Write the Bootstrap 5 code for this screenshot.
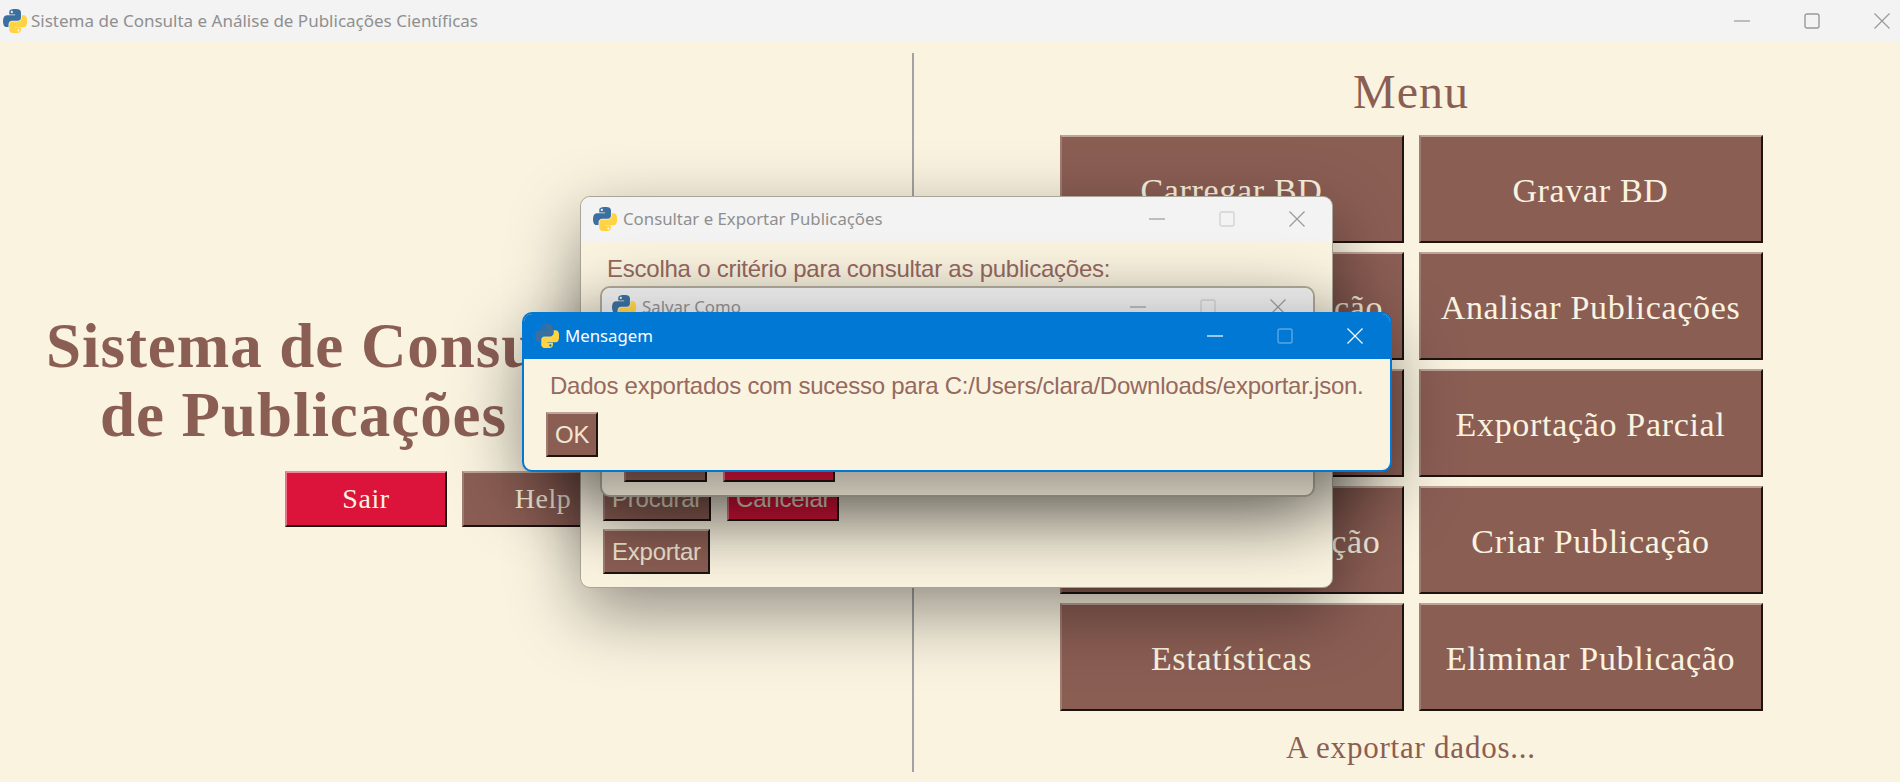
<!DOCTYPE html>
<html lang="pt">

<head>
    <meta charset="UTF-8">
    <meta name="viewport" content="width=device-width, initial-scale=1.0">
    <title>Sistema de Consulta e Análise de Publicações Científicas</title>
    <link href="https://cdn.jsdelivr.net/npm/bootstrap@5.3.0/dist/css/bootstrap.min.css" rel="stylesheet">
    <style>
        html, body { height: 100%; }
        body { background: #faf3e0; overflow: hidden; color: #8b5e54; }

        .title-bar { height: 42px; background: #f3f3f3; flex: none; padding-left: 3px; }
        .title-text { font-family: "Noto Sans", sans-serif; font-size: 17px; color: #8f8f8f; white-space: nowrap; }
        .py-icon { width: 24px; height: 24px; flex: none; }
        .ctl-group { color: #999; margin-left: auto; }
        .ctl-btn { width: 70px; height: 24px; display: flex; align-items: center; justify-content: center; }
        .ctl-btn svg { width: 16px; height: 16px; display: block; }
        .main-ctl { margin-right: -17px; }
        .ctl-faint { opacity: .35; }

        .left-pane { width: 912px; padding: 270px 3px 0 0; }
        .app-title { font-family: "Liberation Serif", serif; font-weight: 700; font-size: 63px; line-height: 69px; letter-spacing: .015em; margin-bottom: 21px; padding-left: 12px; color: #8b5e54; white-space: nowrap; }
        .side-row { gap: 15px; }
        .divider-line { width: 2px; background: #a2a2a2; margin: 11px 0 10px; flex: none; }
        .right-pane { padding-left: 8px; padding-top: 18px; }
        .menu-title { font-family: "Liberation Serif", serif; font-size: 48px; line-height: 64px; letter-spacing: .02em; margin: 0 0 11px; font-weight: 400; color: #8b5e54; }
        .menu-grid { grid-template-columns: 344px 344px; gap: 9px 15px; }
        .status-text { font-family: "Liberation Serif", serif; font-size: 31px; line-height: 40px; letter-spacing: .025em; margin-top: 17px; }

        .relief-btn { background: #8b5e54; color: #faf3e0; border-radius: 0; padding: 0; border-style: solid; border-width: 2px; border-color: #bda498 #1d1412 #1d1412 #a07c70; }
        .relief-btn:hover { background: #8b5e54; color: #faf3e0; border-color: #bda498 #1d1412 #1d1412 #a07c70; }
        .menu-btn { height: 108px; padding-top: 2px; font-family: "Liberation Serif", serif; font-size: 34px; letter-spacing: .02em; }
        .side-btn { width: 162px; height: 56px; font-family: "Liberation Serif", serif; font-size: 28px; letter-spacing: .02em; }
        .danger-btn, .danger-btn:hover { background: #dc143c; border-color: #f0879c #1d1412 #1d1412 #ee6f88; }

        .desk-win { position: absolute; background: #faf3e0; border-radius: 10px; box-shadow: 0 24px 70px rgba(0, 0, 0, .42); }
        .win-bar { height: 45px; padding: 0 0 2px 12px; background: #f3f3f3; border-radius: 10px 10px 0 0; flex: none; }
        .win-name { font-family: "Noto Sans", sans-serif; font-size: 16.8px; margin-left: 2px; color: #8f8f8f; white-space: nowrap; }
        .win-text { font-family: "Liberation Sans", sans-serif; font-size: 24px; line-height: 30px; color: #96695f; white-space: nowrap; letter-spacing: -.01em; }
        .sm-btn, .sm-btn:hover { height: 45px; padding: 0 7px; font-family: "Liberation Sans", sans-serif; font-size: 24px; color: #f0e6d2; letter-spacing: -.01em; }
        .win-body { padding: 8px 22px 13px; }

        .win-consult { left: 580px; top: 196px; width: 753px; height: 392px; border: 1px solid #aaa598; }
        .win-save { left: 600px; top: 286px; width: 715px; height: 211px; border: 2px solid #a8a394; }
        .win-save .win-bar { background: #e9e9e9; height: 40px; padding-left: 10px; }
        .save-first, .save-first:hover { padding: 0 6px; }
        .win-msg { left: 522px; top: 312px; width: 870px; height: 160px; border: 2px solid #0078d4; }
        .win-msg .win-bar { background: #0078d4; padding-left: 11px; border-radius: 8px 8px 0 0; }
        .win-msg .win-name { color: #fff; }
        .win-msg .ctl-group { color: #fff; }
        .msg-body { padding: 8px 0 0 26px; }
        .ok-btn { margin: 11px 0 0 -4px; }
    </style>
</head>

<body>
    <svg width="0" height="0" class="position-absolute">
        <symbol id="pyLogo" viewBox="0 0 110 110">
            <path fill="#3a6f9f" d="M54.9 0c-4.6 0-9 .4-12.8 1.100C30.800 3.100 28.700 7.300 28.700 15v10.200h26.800v3.400H18.600C10.800 28.700 4 33.300 1.900 42.200c-2.500 10.200-2.600 16.600 0 27.300C3.800 77.400 8.300 83 16.100 83h9.200V70.800c0-8.900 7.700-16.700 16.800-16.700h26.800c7.500 0 13.400-6.100 13.400-13.600V15c0-7.300-6.100-12.700-13.400-13.900C64.300.3 59.500 0 54.900 0zM40.400 8.200c2.800 0 5 2.300 5 5.100s-2.300 5.100-5 5.100-5-2.300-5-5.100 2.300-5.100 5-5.100z"/>
            <path fill="#ffd343" d="M85.600 28.700v11.900c0 9.200-7.800 17-16.700 17H42.100c-7.300 0-13.400 6.300-13.400 13.600v25.500c0 7.300 6.300 11.500 13.400 13.600 8.500 2.500 16.600 2.900 26.800 0 6.800-2 13.400-5.900 13.400-13.600V86.500H55.500v-3.400h40.200c7.800 0 10.700-5.400 13.400-13.600 2.800-8.400 2.700-16.500 0-27.300-1.900-7.800-5.600-13.600-13.400-13.600zM70.600 93.300c2.800 0 5 2.300 5 5.100s-2.300 5.100-5 5.100-5-2.300-5-5.100 2.300-5.100 5-5.100z"/>
        </symbol>
        <symbol id="icoMin" viewBox="0 0 16 16"><path d="M0 8h16" stroke="currentColor" stroke-width="1.200" fill="none"/></symbol>
        <symbol id="icoMax" viewBox="0 0 16 16"><rect x="1" y="1" width="14" height="14" rx="2" stroke="currentColor" stroke-width="1.400" fill="none"/></symbol>
        <symbol id="icoClose" viewBox="0 0 16 16"><path d="M.5.500l15 15M15.500.500l-15 15" stroke="currentColor" stroke-width="1.200" fill="none"/></symbol>
    </svg>

    <div class="d-flex flex-column vh-100">
        <div class="title-bar d-flex align-items-center gap-1">
            <svg class="py-icon"><use href="#pyLogo"/></svg>
            <span class="title-text">Sistema de Consulta e Análise de Publicações Científicas</span>
            <div class="ctl-group main-ctl d-flex">
                <span class="ctl-btn"><svg><use href="#icoMin"/></svg></span>
                <span class="ctl-btn"><svg><use href="#icoMax"/></svg></span>
                <span class="ctl-btn"><svg><use href="#icoClose"/></svg></span>
            </div>
        </div>

        <div class="d-flex flex-grow-1">
            <div class="left-pane text-center">
                <h1 class="app-title">Sistema de Consulta e Análise<br>de Publicações Científicas</h1>
                <div class="d-flex justify-content-center side-row">
                    <button type="button" class="btn relief-btn side-btn danger-btn">Sair</button>
                    <button type="button" class="btn relief-btn side-btn">Help</button>
                </div>
            </div>
            <div class="divider-line"></div>
            <div class="right-pane flex-grow-1 d-flex flex-column align-items-center">
                <h2 class="menu-title">Menu</h2>
                <div class="menu-grid d-grid">
                    <button type="button" class="btn relief-btn menu-btn">Carregar BD</button>
                    <button type="button" class="btn relief-btn menu-btn">Gravar BD</button>
                    <button type="button" class="btn relief-btn menu-btn">Consultar Publicação</button>
                    <button type="button" class="btn relief-btn menu-btn">Analisar Publicações</button>
                    <button type="button" class="btn relief-btn menu-btn">Importação</button>
                    <button type="button" class="btn relief-btn menu-btn">Exportação Parcial</button>
                    <button type="button" class="btn relief-btn menu-btn">Atualizar Publicação</button>
                    <button type="button" class="btn relief-btn menu-btn">Criar Publicação</button>
                    <button type="button" class="btn relief-btn menu-btn">Estatísticas</button>
                    <button type="button" class="btn relief-btn menu-btn">Eliminar Publicação</button>
                </div>
                <div class="status-text">A exportar dados...</div>
            </div>
        </div>
    </div>

    <div class="desk-win win-consult d-flex flex-column">
        <div class="win-bar d-flex align-items-center gap-1">
            <svg class="py-icon"><use href="#pyLogo"/></svg>
            <span class="win-name">Consultar e Exportar Publicações</span>
            <div class="ctl-group d-flex">
                <span class="ctl-btn"><svg><use href="#icoMin"/></svg></span>
                <span class="ctl-btn ctl-faint"><svg><use href="#icoMax"/></svg></span>
                <span class="ctl-btn"><svg><use href="#icoClose"/></svg></span>
            </div>
        </div>
        <div class="win-body flex-grow-1 d-flex flex-column">
            <div class="win-text mt-1 ms-1">Escolha o critério para consultar as publicações:</div>
            <div class="d-flex gap-3 mt-auto mb-2">
                <button type="button" class="btn relief-btn sm-btn">Procurar</button>
                <button type="button" class="btn relief-btn sm-btn danger-btn">Cancelar</button>
            </div>
            <div>
                <button type="button" class="btn relief-btn sm-btn">Exportar</button>
            </div>
        </div>
    </div>

    <div class="desk-win win-save d-flex flex-column">
        <div class="win-bar d-flex align-items-center gap-1">
            <svg class="py-icon"><use href="#pyLogo"/></svg>
            <span class="win-name">Salvar Como</span>
            <div class="ctl-group d-flex">
                <span class="ctl-btn"><svg><use href="#icoMin"/></svg></span>
                <span class="ctl-btn ctl-faint"><svg><use href="#icoMax"/></svg></span>
                <span class="ctl-btn"><svg><use href="#icoClose"/></svg></span>
            </div>
        </div>
        <div class="win-body flex-grow-1 d-flex align-items-end">
            <div class="d-flex gap-3">
                <button type="button" class="btn relief-btn sm-btn save-first">Salvar</button>
                <button type="button" class="btn relief-btn sm-btn danger-btn">Cancelar</button>
            </div>
        </div>
    </div>

    <div class="desk-win win-msg d-flex flex-column">
        <div class="win-bar d-flex align-items-center gap-1">
            <svg class="py-icon"><use href="#pyLogo"/></svg>
            <span class="win-name">Mensagem</span>
            <div class="ctl-group d-flex">
                <span class="ctl-btn"><svg><use href="#icoMin"/></svg></span>
                <span class="ctl-btn ctl-faint"><svg><use href="#icoMax"/></svg></span>
                <span class="ctl-btn"><svg><use href="#icoClose"/></svg></span>
            </div>
        </div>
        <div class="msg-body d-flex flex-column align-items-start">
            <div class="win-text mt-1">Dados exportados com sucesso para C:/Users/clara/Downloads/exportar.json.</div>
            <button type="button" class="btn relief-btn sm-btn ok-btn">OK</button>
        </div>
    </div>

    <script src="https://cdn.jsdelivr.net/npm/bootstrap@5.3.0/dist/js/bootstrap.bundle.min.js"></script>
</body>

</html>
